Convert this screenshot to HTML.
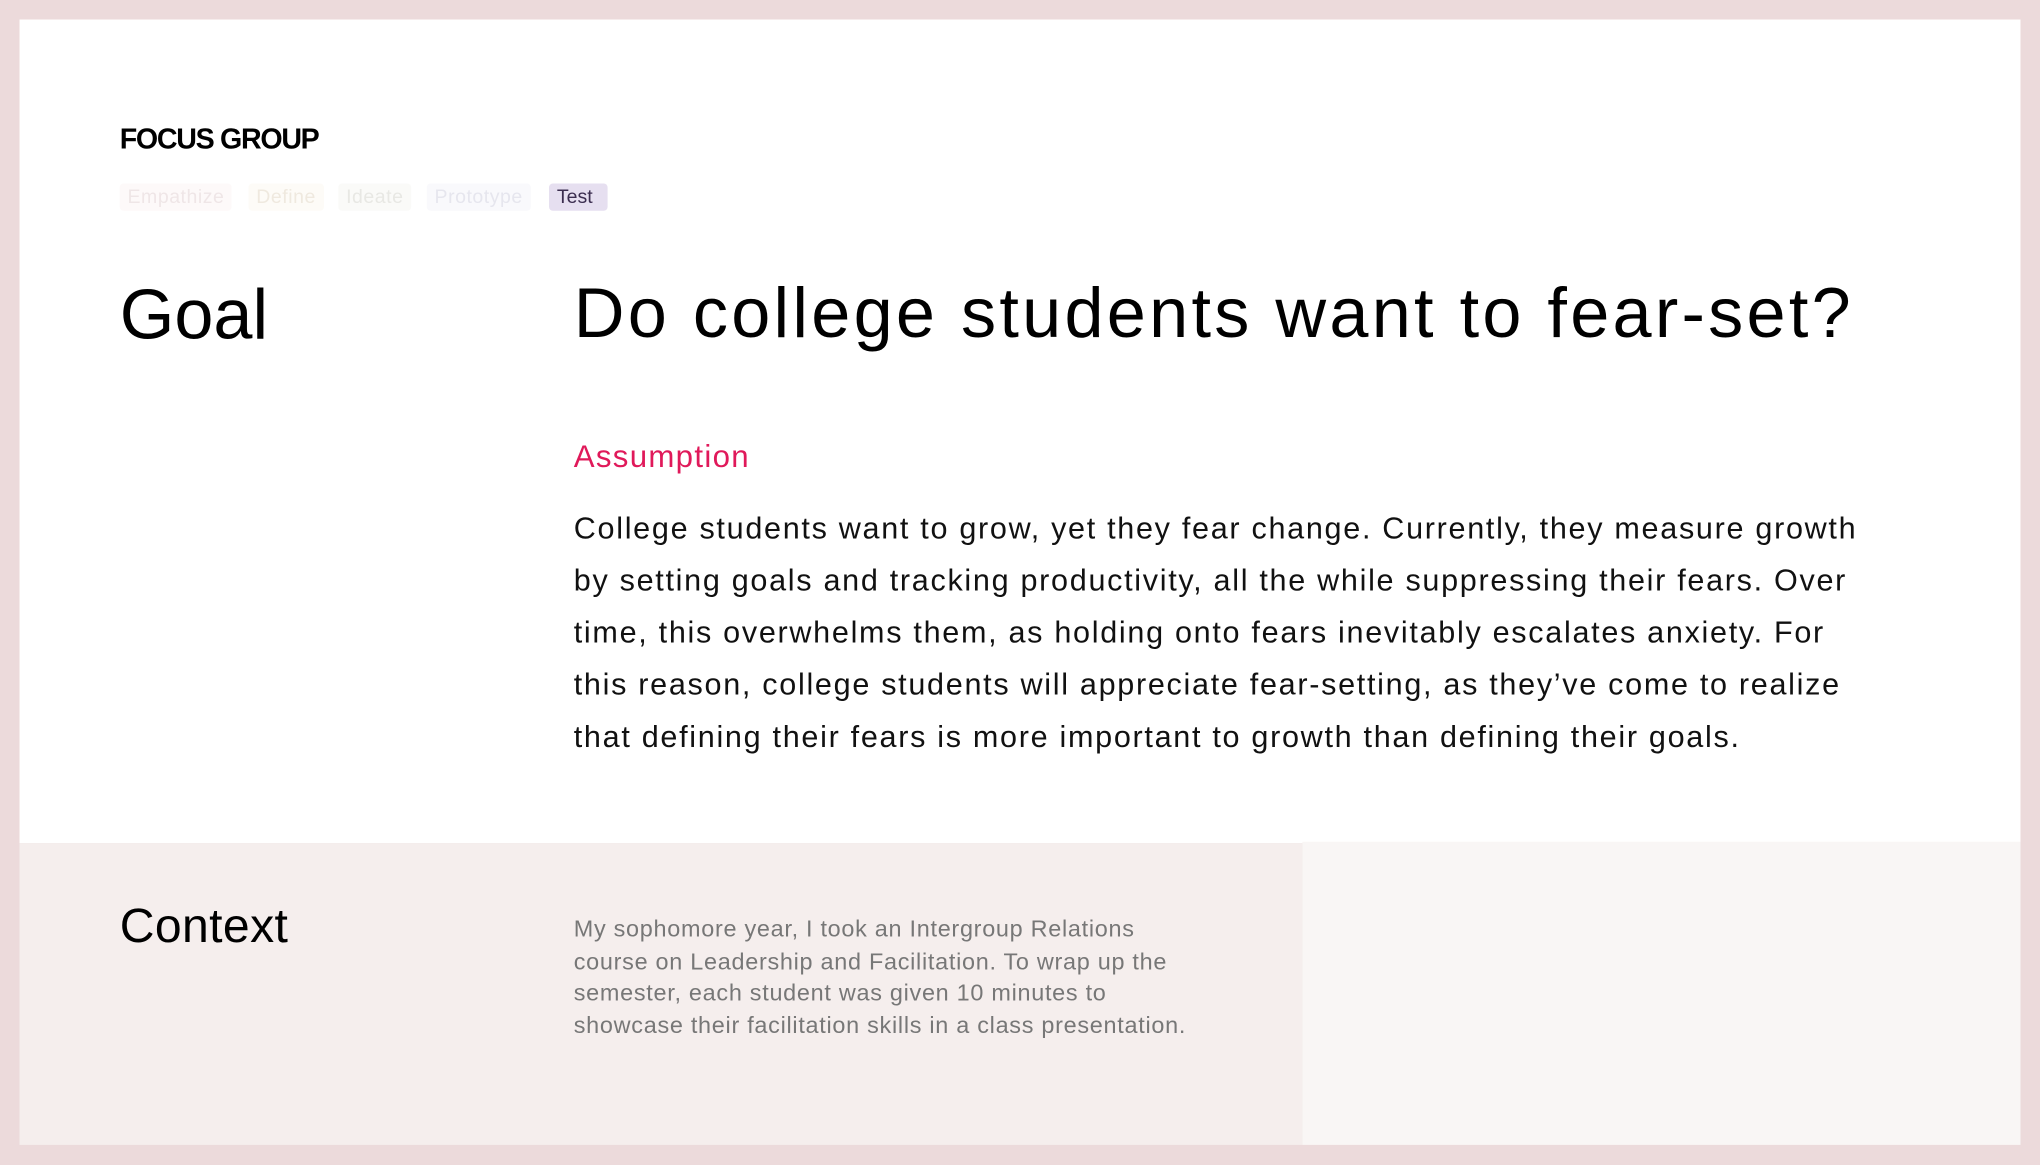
<!DOCTYPE html>
<html><head><meta charset="utf-8"><style>
html,body{margin:0;padding:0;width:2040px;height:1165px;overflow:hidden;background:#ecdadb;}
#w{position:absolute;left:0;top:0;width:1568px;height:895px;transform:scale(1.30102);transform-origin:0 0;font-family:"Liberation Sans",sans-serif;}
.a{position:absolute;white-space:nowrap;}
.tag{position:absolute;top:141px;height:21px;line-height:21px;font-size:15px;padding:0 6px;border-radius:3px;letter-spacing:0.4px;}
</style></head><body><div id="w">
<div class="a" style="left:15px;top:15px;width:1538px;height:633px;background:#fff"></div>
<div class="a" style="left:15px;top:648px;width:986px;height:232px;background:#f5eeed"></div>
<div class="a" style="left:1001px;top:647px;width:552px;height:233px;background:#f9f6f5"></div>

<div class="a" style="left:92px;top:94px;font-size:22px;font-weight:bold;letter-spacing:-1px;color:#000">FOCUS GROUP</div>
<div class="tag" style="left:92px;background:#fdf9f9;color:#efe6e7">Empathize</div>
<div class="tag" style="left:191px;background:#fdfbf7;color:#efe9df">Define</div>
<div class="tag" style="left:260px;background:#fafaf8;color:#e8e8e4">Ideate</div>
<div class="tag" style="left:328px;background:#f9f9fc;color:#e6e6ee">Prototype</div>
<div class="tag" style="left:422px;width:33px;letter-spacing:0;background:#e6dff0;color:#3b2d4f">Test</div>

<div class="a" style="left:92px;top:209px;font-size:54px;line-height:66px;color:#000">Goal</div>
<div class="a" style="left:441px;top:208px;font-size:54px;line-height:66px;color:#000;letter-spacing:2.5px">Do college students want to fear-set?</div>
<div class="a" style="left:441px;top:337px;font-size:24px;line-height:30px;color:#e0195a;letter-spacing:1px">Assumption</div>
<div class="a" style="left:441px;top:386px;font-size:23.5px;line-height:40px;color:#111;letter-spacing:1.3px">College students want to grow, yet they fear change. Currently, they measure growth<br>by setting goals and tracking productivity, all the while suppressing their fears. Over<br>time, this overwhelms them, as holding onto fears inevitably escalates anxiety. For<br>this reason, college students will appreciate fear-setting, as they’ve come to realize<br>that defining their fears is more important to growth than defining their goals.</div>

<div class="a" style="left:92px;top:690px;font-size:37px;line-height:44px;color:#000;letter-spacing:0.3px">Context</div>
<div class="a" style="left:441px;top:702px;font-size:18px;line-height:24.6px;color:#777;letter-spacing:0.55px">My sophomore year, I took an Intergroup Relations<br>course on Leadership and Facilitation. To wrap up the<br>semester, each student was given 10 minutes to<br>showcase their facilitation skills in a class presentation.</div>
</div></body></html>
